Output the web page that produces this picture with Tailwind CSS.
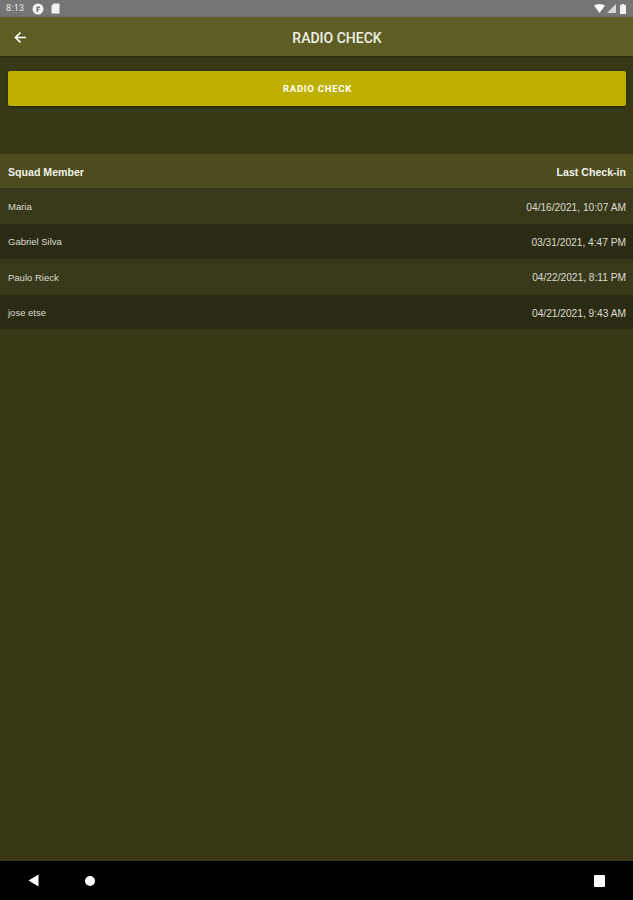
<!DOCTYPE html>
<html>
<head>
<meta charset="utf-8">
<script src="https://cdn.jsdelivr.net/npm/@tailwindcss/browser@4"></script>
</head>
<body class="bg-[#383816]">
<div class="w-[633px] h-[900px] flex flex-col overflow-hidden bg-[#383816] text-white font-['Roboto',sans-serif]">
  <div class="h-[17px] shrink-0 bg-[#757575] flex items-center pl-[6px] pr-[7px] text-[#e8e8e8]">
    <span class="text-[9px] leading-none w-[21px] tracking-[0.2px]">8:13</span>
    <svg class="ml-[5px]" width="12" height="12" viewBox="0 0 12 12"><circle cx="6" cy="6" r="5.5" fill="#f2f2f2"/><path d="M4.5 9V3.5h3.5v1.6H6v1H7.5v1H6V9z" fill="#757575"/></svg>
    <svg class="ml-[7px]" width="9" height="11" viewBox="0 0 9 11"><path d="M2.5 0.5H8.5V10.5H0.5V3z" fill="#f2f2f2"/></svg>
    <div class="ml-auto flex items-center gap-[2px]">
      <svg width="11" height="9" viewBox="0 0 11 9"><path d="M0 1.5Q5.5-1.5 11 1.5L5.5 9z" fill="#fff"/></svg>
      <svg width="9" height="9" viewBox="0 0 9 9"><path d="M9 0V9H0z" fill="#d8d8d8"/></svg>
      <svg class="ml-[2px]" width="6" height="10" viewBox="0 0 6 10"><path d="M1.8 0h2.4v1H6V10H0V1h1.8z" fill="#f2f2f2"/></svg>
    </div>
  </div>
  <header class="h-[39px] shrink-0 bg-[#5e5e24] relative flex items-center justify-center pt-[4px] shadow-[0_1px_2px_rgba(0,0,0,0.3)]">
    <svg class="absolute left-[14px] top-[14px]" width="13" height="13" viewBox="0 0 13 13" fill="none" stroke="#fff" stroke-width="1.7"><path d="M12 6.5H2M6.5 1.5L1.5 6.5l5 5"/></svg>
    <h1 class="text-[14px] font-medium text-[#f0f0e8] ml-[41px]">RADIO CHECK</h1>
  </header>
  <main class="flex-1 flex flex-col">
    <div class="px-[7.5px] pt-[15px]">
      <button class="w-full h-[35px] rounded-[2px] bg-[#bfb000] text-white text-[9.5px] font-bold tracking-[0.75px] flex items-center justify-center pt-[1px] pl-[2px] shadow-[0_1px_2px_rgba(0,0,0,0.4)]">RADIO CHECK</button>
    </div>
    <div class="mt-[48px] h-[34px] bg-[#4c4c1e] flex items-center justify-between pl-[8px] pr-[7px] pt-[4px] text-[10.6px] font-bold text-[#f2f2ea] font-['Liberation_Sans',sans-serif]">
      <span>Squad Member</span><span>Last Check-in</span>
    </div>
    <div class="h-[36px] bg-[#38381a] flex items-center justify-between pl-[8px] pr-[7px] pt-[3px] text-[9.5px] text-[#dcdcd0] font-['Liberation_Sans',sans-serif]">
      <span>Maria</span><span class="text-[10.2px]">04/16/2021, 10:07 AM</span>
    </div>
    <div class="h-[35px] bg-[#2b2b13] flex items-center justify-between pl-[8px] pr-[7px] pt-[2px] text-[9.5px] text-[#dcdcd0] font-['Liberation_Sans',sans-serif]">
      <span>Gabriel Silva</span><span class="text-[10.2px]">03/31/2021, 4:47 PM</span>
    </div>
    <div class="h-[36px] bg-[#38381a] flex items-center justify-between pl-[8px] pr-[7px] pt-[2px] text-[9.5px] text-[#dcdcd0] font-['Liberation_Sans',sans-serif]">
      <span>Paulo Rieck</span><span class="text-[10.2px]">04/22/2021, 8:11 PM</span>
    </div>
    <div class="h-[34px] bg-[#2b2b13] flex items-center justify-between pl-[8px] pr-[7px] pt-[3px] text-[9.5px] text-[#dcdcd0] font-['Liberation_Sans',sans-serif]">
      <span>jose etse</span><span class="text-[10.2px]">04/21/2021, 9:43 AM</span>
    </div>
  </main>
  <nav class="h-[39px] shrink-0 bg-black relative">
    <svg class="absolute left-[28px] top-[13px]" width="11" height="13" viewBox="0 0 11 13"><path d="M10.5 0.5V12.5L0.5 6.5z" fill="#fff"/></svg>
    <div class="absolute left-[85px] top-[15px] w-[10px] h-[10px] rounded-full bg-white"></div>
    <div class="absolute left-[594px] top-[14px] w-[11px] h-[12px] rounded-[1px] bg-white"></div>
  </nav>
</div>
</body>
</html>
